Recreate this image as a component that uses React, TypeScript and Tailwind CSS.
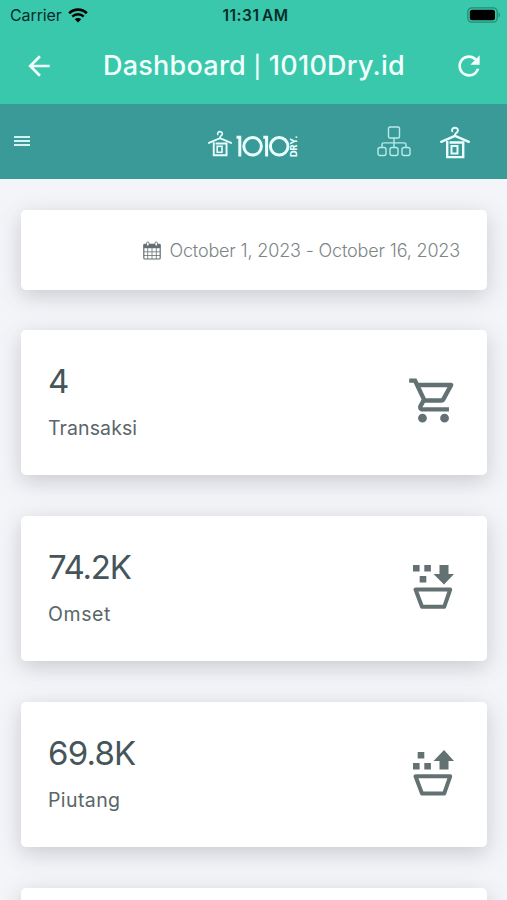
import React from 'react';
import { MdArrowBack, MdOutlineShoppingCart, MdRefresh } from 'react-icons/md';

interface IconProps {
  className?: string;
}

function WifiIcon({ className }: IconProps) {
  return (
    <svg viewBox="0 0 20 15" className={className} fill="none" stroke="currentColor">
      <path d="M1.2 5.3a12.6 12.6 0 0 1 17.6 0" strokeWidth="2.7" />
      <path d="M4.3 8.6a8.2 8.2 0 0 1 11.4 0" strokeWidth="2.5" />
      <path d="M10 14.6 6.8 11.3a4.6 4.6 0 0 1 6.4 0Z" fill="currentColor" stroke="none" />
    </svg>
  );
}

function BatteryIcon({ className }: IconProps) {
  return (
    <svg viewBox="0 0 34 16" className={className}>
      <rect x="0.8" y="0.8" width="29.4" height="14.4" rx="4.2" fill="none" stroke="#278a75" strokeWidth="1.3" />
      <rect x="2.8" y="2.8" width="25.2" height="10.4" rx="2.5" fill="#000" />
      <path d="M31.6 5.5v5c1.8-.8 1.8-4.2 0-5Z" fill="#278a75" />
    </svg>
  );
}

function HangerIcon({ className }: IconProps) {
  return (
    <svg viewBox="0 0 30 32" className={className} fill="none" stroke="currentColor">
      <path d="M12.2 4.8c-.6-2.2.8-3.6 2.8-3.6 2.4 0 3.7 2.3 2.4 4.2-.7 1-2.4 1.5-2.4 3.2v1" strokeWidth="2" strokeLinecap="round" />
      <path d="M1.2 15.3 15 9.4l13.8 5.9" strokeWidth="2.4" strokeLinecap="round" />
      <path d="M7.2 14.5V30.6h16V16H9.5" strokeWidth="2.4" />
      <rect x="11.5" y="19.5" width="6" height="7.5" strokeWidth="2" />
    </svg>
  );
}

function SitemapIcon({ className }: IconProps) {
  return (
    <svg viewBox="0 0 34 31" className={className} fill="none" stroke="currentColor" strokeWidth="1.4">
      <rect x="11.5" y="1" width="11" height="11" rx="1.5" />
      <path d="M17 12v9M5 21.2v-2.5q0-1.8 1.8-1.8h20.4q1.8 0 1.8 1.8v2.5" />
      <rect x="1" y="21.5" width="8" height="8" rx="2" />
      <rect x="13" y="21.5" width="8" height="8" rx="2" />
      <rect x="25" y="21.5" width="8" height="8" rx="2" />
    </svg>
  );
}

function Logo() {
  return (
    <div className="mt-[4px] flex items-center text-[#e9ffff]">
      <HangerIcon className="h-[27px] w-[24px]" />
      <svg viewBox="0 0 66 27" className="ml-1 h-[27px] w-[66px]" fill="none" stroke="currentColor" strokeWidth="3">
        <path d="M.5 7.2h3.3V26.500M27.3 7.200h3.300V26.500" />
        <circle cx="16.600" cy="16.300" r="8.800" />
        <circle cx="43.200" cy="16.300" r="8.800" />
        <text
          transform="translate(60.500 27) rotate(-90)"
          textLength="21.500"
          lengthAdjust="spacingAndGlyphs"
          fill="currentColor"
          stroke="none"
          className="font-['Inter'] text-[8.5px] font-extrabold"
        >
          DRY.
        </text>
      </svg>
    </div>
  );
}

function CalendarIcon({ className }: IconProps) {
  return (
    <svg viewBox="0 0 18 19" className={className} fill="none" stroke="currentColor">
      <path d="M.7 3.200h16.600v4H.7z" fill="currentColor" stroke="none" />
      <rect x="0.8" y="3.3" width="16.4" height="14.7" rx="1" strokeWidth="1.2" />
      <path d="M4.7 7v11M9 7v11M13.3 7v11M1 10.800h16M1 14.500h16" strokeWidth="0.8" />
      <rect x="3.5" y="1" width="2.5" height="4" rx="1.2" fill="#fff" strokeWidth="0.9" />
      <rect x="12" y="1" width="2.5" height="4" rx="1.2" fill="#fff" strokeWidth="0.9" />
    </svg>
  );
}

function BasketInIcon({ className }: IconProps) {
  return (
    <svg viewBox="0 0 42 46" className={className} fill="currentColor">
      <path d="M0 1h6.600v6.600H0zM11.300 1h6.600v6.600h-6.600zM6.700 12h6.600v6.600H6.700z" />
      <path d="M26.500 1h9v9h5.500L31 20.500 20.500 10h6z" />
      <path d="M2.500 25.500h34.700L31.200 42.800H9z" fill="none" stroke="currentColor" strokeWidth="4" strokeLinejoin="round" />
    </svg>
  );
}

function BasketOutIcon({ className }: IconProps) {
  return (
    <svg viewBox="0 0 42 46" className={className} fill="currentColor">
      <path d="M4.700 2h6.600v6.600H4.700zM0 13h6.600v6.600H0zM11.300 13h6.600v6.600h-6.600z" />
      <path d="M26.500 19.600h9v-8.700h5.500L31 0 20.500 10.900h6z" />
      <path d="M2.500 26.300h34.700l-6 17.200H9z" fill="none" stroke="currentColor" strokeWidth="4" strokeLinejoin="round" />
    </svg>
  );
}

interface StatCardProps {
  value: string;
  label: string;
  valueClass?: string;
  labelClass?: string;
  icon: React.ReactNode;
}

const cardStyle = 'rounded-[5px] bg-white shadow-[0_6px_22px_rgba(75,77,82,0.25)]';

function StatCard({ value, label, valueClass = '', labelClass = '', icon }: StatCardProps) {
  return (
    <div className={`${cardStyle} flex h-[145px] shrink-0 justify-between pl-[27px] pr-[32px]`}>
      <div className="pt-[31px] whitespace-nowrap">
        <div className={`text-[33px] leading-10 text-[#465559] ${valueClass}`}>{value}</div>
        <div className={`mt-[12px] text-[19.5px] leading-[30px] text-[#59666a] ${labelClass}`}>{label}</div>
      </div>
      <div className="pt-[48px] text-[#637173]">{icon}</div>
    </div>
  );
}

export default function App() {
  return (
    <div className="flex h-[900px] w-[507px] flex-col overflow-hidden bg-[#f3f5f9] font-['Inter','Liberation_Sans',sans-serif]">
      <header className="h-[104px] shrink-0 bg-[#39c8ac]">
        <div className="grid h-[30px] grid-cols-3 items-center pl-[10px] pr-[6px] text-[#062c27]">
          <div className="flex items-center gap-[6px]">
            <span className="text-[16px] tracking-[-0.1px]">Carrier</span>
            <WifiIcon className="h-[15px] w-[20px] text-black" />
          </div>
          <div className="pt-px text-center text-[15.5px] font-semibold tracking-[0.5px] whitespace-nowrap [word-spacing:-2px]">
            11:31 AM
          </div>
          <BatteryIcon className="h-[16px] w-[34px] justify-self-end" />
        </div>
        <div className="flex h-[72px] items-center justify-between pl-[23px] pr-[22px] text-[#f2fffc]">
          <MdArrowBack className="size-8" />
          <h1 className="text-[27px] font-medium tracking-[0.25px] whitespace-nowrap">
            Dashboard <span className="text-[22px]">|</span> 1010Dry.id
          </h1>
          <MdRefresh className="size-8" />
        </div>
      </header>

      <nav className="flex h-[75px] shrink-0 items-center bg-[#3a9a98] text-[#d2f3f2]">
        <div className="mb-[2px] ml-[14px] flex w-4 flex-col gap-[2px]">
          <span className="h-[2px] bg-current" />
          <span className="h-[2px] bg-current" />
          <span className="h-[2px] bg-current" />
        </div>
        <div className="ml-[178px]">
          <Logo />
        </div>
        <SitemapIcon className="ml-[75px] h-[31px] w-[34px] text-[#b9eaea]" />
        <HangerIcon className="mt-[2px] ml-[29px] h-[33px] w-[30px] text-[#e9ffff]" />
      </nav>

      <main className="flex flex-col gap-[41px] pr-[20px] pl-[21px] pt-[31px]">
        <div className={`${cardStyle} -mb-px flex h-[80px] shrink-0 items-center justify-end pr-[27px] text-[#7c8587]`}>
          <CalendarIcon className="mr-[8px] h-[19px] w-[18px] text-[#656e73]" />
          <span className="text-[18px] font-light tracking-[-0.16px] whitespace-nowrap">
            October 1, 2023 - October 16, 2023
          </span>
        </div>
        <StatCard
          value="4"
          label="Transaksi"
          labelClass="tracking-[0.1px]"
          icon={<MdOutlineShoppingCart className="-mt-[4px] -mr-[5px] size-[53px]" />}
        />
        <StatCard
          value="74.2K"
          label="Omset"
          valueClass="tracking-[-1.2px]"
          labelClass="tracking-[0.6px]"
          icon={<BasketInIcon className="h-[46px] w-[42px]" />}
        />
        <StatCard
          value="69.8K"
          label="Piutang"
          valueClass="tracking-[-0.8px]"
          labelClass="tracking-[0.4px]"
          icon={<BasketOutIcon className="h-[46px] w-[42px]" />}
        />
        <div className={`${cardStyle} h-[145px] shrink-0`} />
      </main>
    </div>
  );
}
